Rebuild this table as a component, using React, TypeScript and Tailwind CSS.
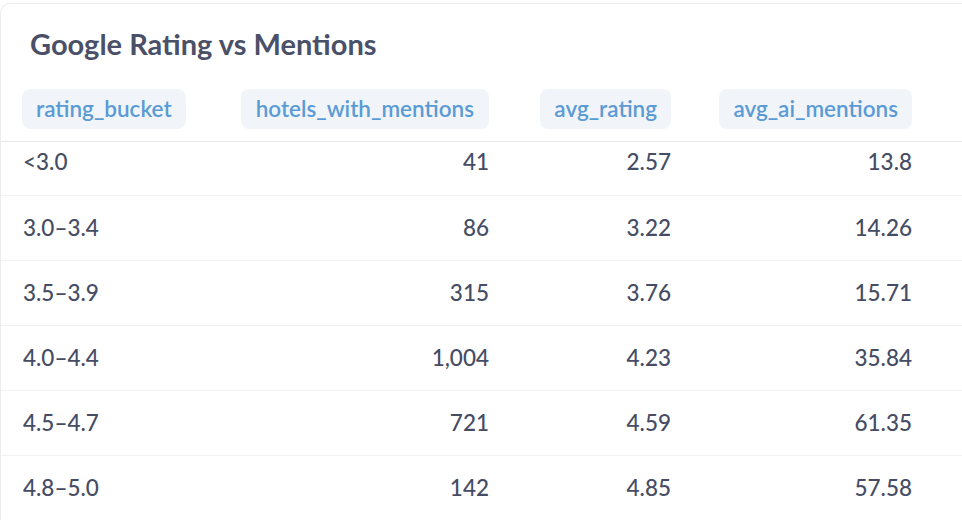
export default function App() {
    const rows = [
        ["<3.0", "41", "2.57", "13.8"],
        ["3.0–3.4", "86", "3.22", "14.26"],
        ["3.5–3.9", "315", "3.76", "15.71"],
        ["4.0–4.4", "1,004", "4.23", "35.84"],
        ["4.5–4.7", "721", "4.59", "61.35"],
        ["4.8–5.0", "142", "4.85", "57.58"],
    ]

    return (
        <div className="w-[962px] h-[520px] overflow-hidden bg-white font-['Lato',sans-serif]">
            <div className="mt-[3px] w-[1100px] rounded-tl-[10px] border-l border-t border-[#eaecef] bg-white">
                <h2 className="pl-[29px] pt-[22px] text-[29px] leading-[36px] font-bold text-[#4a5068]">
                    Google Rating vs Mentions
                </h2>
                <div className="mt-[27px] flex items-center h-[53px] pb-[13px] pl-[21px] border-b border-[#e6e8eb]">
                    <div className="w-[166px]">
                        <span className="inline-flex items-center h-[40px] px-[14px] rounded-lg bg-[#f1f5fa] text-[22.5px] font-semibold text-[#5b9bd5]">rating_bucket</span>
                    </div>
                    <div className="w-[301px] flex justify-end">
                        <span className="inline-flex items-center h-[40px] px-[15px] rounded-lg bg-[#f1f5fa] text-[22.5px] font-semibold text-[#5b9bd5]">hotels_with_mentions</span>
                    </div>
                    <div className="w-[182px] flex justify-end">
                        <span className="inline-flex items-center h-[40px] px-[14px] rounded-lg bg-[#f1f5fa] text-[22.5px] font-semibold text-[#5b9bd5]">avg_rating</span>
                    </div>
                    <div className="w-[241px] flex justify-end">
                        <span className="inline-flex items-center h-[40px] px-[14px] rounded-lg bg-[#f1f5fa] text-[22.5px] font-semibold text-[#5b9bd5]">avg_ai_mentions</span>
                    </div>
                </div>
                {rows.map((r, i) => (
                    <div
                        key={i}
                        className={
                            i === 0
                                ? "flex items-start pt-[3px] h-[54px] pl-[22px] border-b border-[#f0f1f3] text-[22.5px] font-medium text-[#454c64]"
                                : "flex items-center h-[65px] pl-[22px] border-b border-[#f0f1f3] text-[22.5px] font-medium text-[#454c64]"
                        }
                    >
                        <div className="w-[165px]">{r[0]}</div>
                        <div className="w-[301px] text-right">{r[1]}</div>
                        <div className="w-[182px] text-right">{r[2]}</div>
                        <div className="w-[241px] text-right">{r[3]}</div>
                    </div>
                ))}
            </div>
        </div>
    )
}
